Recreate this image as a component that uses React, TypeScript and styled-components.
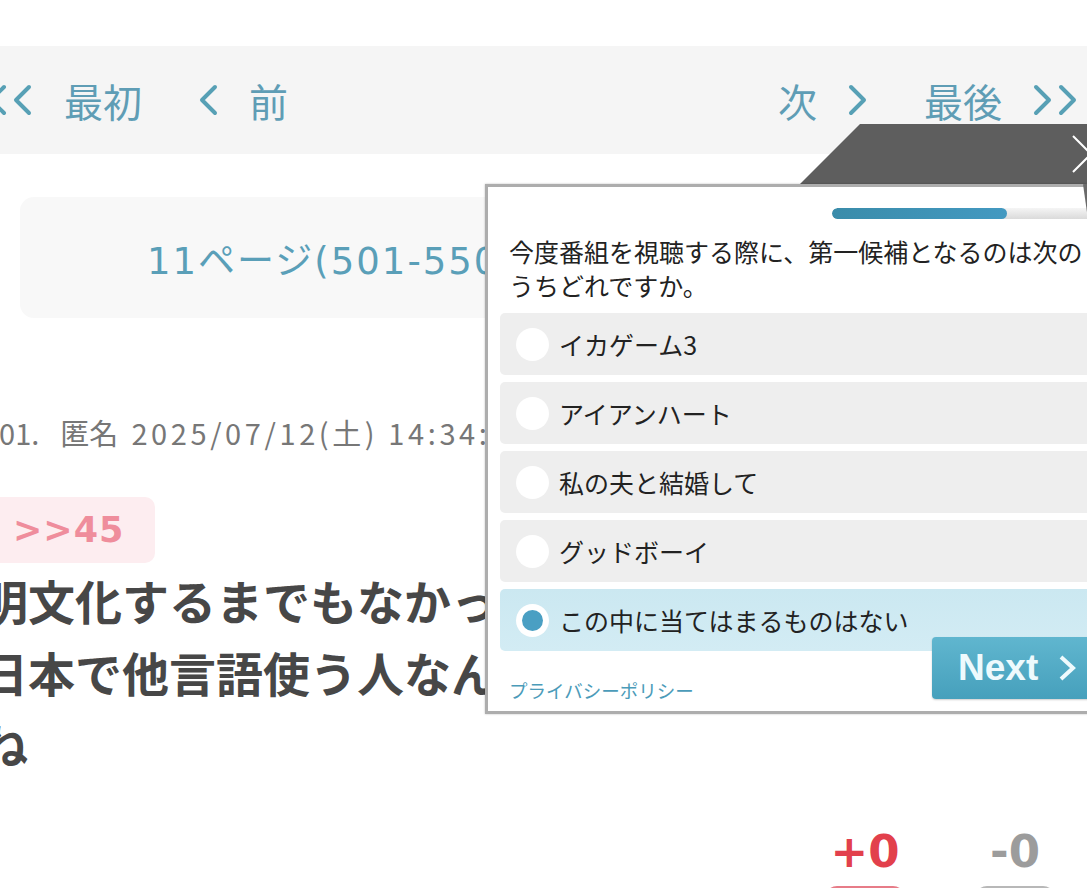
import React from 'react'
import styled, { createGlobalStyle } from 'styled-components'

const GlobalStyle = createGlobalStyle`
  html, body {
    margin: 0;
    padding: 0;
    overflow: hidden;
    background: #fff;
  }
  body {
    font-family: "Noto Sans CJK JP", "Noto Sans", sans-serif;
  }
`

const Screen = styled.div`
  position: relative;
  width: 1087px;
  height: 888px;
  overflow: hidden;
  padding-top: 46px;
  box-sizing: border-box;
`

/* pager */

const Pager = styled.nav`
  display: flex;
  justify-content: space-between;
  align-items: center;
  height: 108px;
  padding-right: 9px;
  background: #f5f5f5;
`

const PagerGroup = styled.div<{ $shift?: number }>`
  display: flex;
  align-items: center;
  gap: 57px;
  margin-left: ${({ $shift }) => $shift ?? 0}px;
`

const PagerLink = styled.a`
  display: flex;
  align-items: center;
  gap: 31px;
  color: #5f9db5;
  font-size: 39px;
  line-height: 1;
  text-decoration: none;
`

const Chevron = ({ dir, double }: { dir: 'left' | 'right', double?: boolean }) => {
  const one = dir === 'left' ? '16,3 3,16 16,29' : '3,3 16,16 3,29'
  return (
    <svg width={ double ? 45 : 19 } height="32" viewBox={ `0 0 ${double ? 45 : 19} 32` }>
      <polyline points={ one } fill="none" stroke="#57a0b5" strokeWidth="4" strokeLinecap="round" strokeLinejoin="round" />
      { double && (
        <g transform="translate(25 0)">
          <polyline points={ one } fill="none" stroke="#57a0b5" strokeWidth="4" strokeLinecap="round" strokeLinejoin="round" />
        </g>
      ) }
    </svg>
  )
}

const PageSelect = styled.div`
  display: flex;
  align-items: center;
  height: 121px;
  margin: 43px 20px 0;
  padding-left: 127px;
  border-radius: 14px;
  background: #f8f8f8;
  color: #5a9fb8;
  font-family: "DejaVu Sans", "Noto Sans CJK JP", sans-serif;
  font-size: 37px;
  letter-spacing: 2px;
`

/* comment */

const Meta = styled.div`
  display: flex;
  align-items: baseline;
  margin: 94px 0 0 -17px;
  color: #777;
  font-size: 29px;
  line-height: 40px;
  white-space: nowrap;
`

const MetaName = styled.span`
  margin: 0 13px 0 21px;
`

const MetaDate = styled.span`
  letter-spacing: 3.6px;
`

const Anchor = styled.div`
  display: flex;
  align-items: center;
  width: fit-content;
  height: 66px;
  margin: 45px 0 0 -10px;
  padding: 0 31px 0 23px;
  border-radius: 10px;
  background: #fdedf0;
  color: #ef8d9c;
  font-family: "DejaVu Sans", sans-serif;
  font-weight: bold;
  font-size: 35px;
  letter-spacing: 1px;
`

const Body = styled.p`
  margin: 1px 0 0 -19px;
  color: #474747;
  font-size: 47px;
  font-weight: 700;
  line-height: 72px;
  white-space: pre-line;
`

const Votes = styled.div`
  display: flex;
  justify-content: flex-end;
  gap: 70px;
  margin-top: 49px;
  padding-right: 32px;
`

const Vote = styled.div`
  display: flex;
  flex-direction: column;
  align-items: center;
  gap: 11px;
  width: 80px;
`

const VoteCount = styled.span<{ $plus?: boolean }>`
  color: ${({ $plus }) => ($plus ? '#e2404c' : '#9c9c9c')};
  font-family: "DejaVu Sans", sans-serif;
  font-weight: bold;
  font-size: 45px;
  line-height: 46px;
`

const VoteButton = styled.button<{ $plus?: boolean }>`
  width: 80px;
  height: 60px;
  border: 0;
  border-radius: 12px;
  background: ${({ $plus }) => ($plus ? '#e77c88' : '#b8b8b8')};
`

/* survey overlay */

const Survey = styled.div`
  position: absolute;
  left: 485px;
  top: 124px;
  width: 638px;
  display: flex;
  flex-direction: column;
`

const SurveyTab = styled.div`
  display: flex;
  align-items: center;
  height: 60px;
  margin-left: 315px;
  padding-left: 271px;
  background: #5e5e5e;
  clip-path: polygon(60px 0, 100% 0, 100% 100%, 0 100%);
`

const SurveyBox = styled.div`
  position: relative;
  border: 3px solid #adadad;
  background: #fff;
  box-shadow: 0 0 2px rgba(0, 0, 0, 0.25);
`

const TabEdge = styled.span`
  position: absolute;
  left: 595px;
  top: -3px;
  width: 4px;
  height: 31px;
  background: #6a6a6a;
  transform: rotate(-8deg);
  transform-origin: top;
`

const Progress = styled.div`
  display: flex;
  justify-content: flex-end;
  margin-top: 21px;
  padding-right: 20px;
`

const Track = styled.div`
  width: 268px;
  height: 11px;
  border-radius: 6px;
  background: linear-gradient(#f5f5f5, #dadada);
  overflow: hidden;
`

const Fill = styled.div`
  height: 100%;
  border-radius: 6px;
  background: linear-gradient(to right, #3a8caa, #4399c1);
`

const Question = styled.p`
  margin: 15px 21px 0;
  color: #222;
  font-size: 25px;
  line-height: 34px;
`

const Options = styled.div`
  display: flex;
  flex-direction: column;
  gap: 7px;
  margin: 11px 12px 0;
`

const Option = styled.label<{ $checked?: boolean }>`
  display: flex;
  align-items: center;
  gap: 10px;
  height: 62px;
  padding-left: 16px;
  border-radius: 5px;
  background: ${({ $checked }) => ($checked ? 'linear-gradient(#cbe8f1, #d3ecf4)' : '#eeeeee')};
  color: #222;
  font-size: 25px;
`

const Radio = styled.span<{ $checked?: boolean }>`
  display: flex;
  align-items: center;
  justify-content: center;
  width: 33px;
  height: 33px;
  border-radius: 50%;
  background: #fff;

  &::after {
    content: "";
    display: ${({ $checked }) => ($checked ? 'block' : 'none')};
    width: 21px;
    height: 21px;
    border-radius: 50%;
    background: #4a9fc3;
  }
`

const Footer = styled.div`
  display: flex;
  justify-content: space-between;
  align-items: flex-end;
  margin-top: -14px;
  padding: 0 12px 12px 21px;
`

const Privacy = styled.a`
  margin-bottom: -3px;
  color: #4b9bb9;
  font-size: 18.5px;
  line-height: 24px;
  text-decoration: none;
`

const NextButton = styled.button`
  display: flex;
  align-items: center;
  gap: 20px;
  width: 176px;
  height: 62px;
  padding: 0 0 0 26px;
  border: 0;
  border-radius: 4px;
  background: linear-gradient(#60b6cf, #46a0bc);
  box-shadow: 0 1px 2px rgba(0, 0, 0, 0.2);
  color: #eefafd;
  font-family: "Liberation Sans", Arial, sans-serif;
  font-weight: bold;
  font-size: 37px;
`

const choices = ['イカゲーム3', 'アイアンハート', '私の夫と結婚して', 'グッドボーイ', 'この中に当てはまるものはない']

export default function App() {
  return (
    <>
      <GlobalStyle />
      <Screen>
        <Pager>
          <PagerGroup $shift={ -12 }>
            <PagerLink><Chevron dir="left" double />最初</PagerLink>
            <PagerLink><Chevron dir="left" />前</PagerLink>
          </PagerGroup>
          <PagerGroup>
            <PagerLink>次<Chevron dir="right" /></PagerLink>
            <PagerLink>最後<Chevron dir="right" double /></PagerLink>
          </PagerGroup>
        </Pager>

        <PageSelect>11ページ(501-550)</PageSelect>

        <Meta>
          <span>501.</span>
          <MetaName>匿名</MetaName>
          <MetaDate>2025/07/12(土) 14:34:22</MetaDate>
        </Meta>
        <Anchor>&gt;&gt;45</Anchor>
        <Body>{ '明文化するまでもなかったんだろうけど、昔は\n日本で他言語使う人なんてそんなにいなかったから\nね' }</Body>

        <Votes>
          <Vote>
            <VoteCount $plus>+0</VoteCount>
            <VoteButton $plus />
          </Vote>
          <Vote>
            <VoteCount>-0</VoteCount>
            <VoteButton />
          </Vote>
        </Votes>

        <Survey>
          <SurveyTab>
            <svg width="40" height="40" viewBox="0 0 40 40">
              <path d="M2 2 L38 38 M38 2 L2 38" stroke="#fff" strokeWidth="2" />
            </svg>
          </SurveyTab>
          <SurveyBox>
            <TabEdge />
            <Progress>
              <Track>
                <Fill style={ { width: `${(175 / 268) * 100}%` } } />
              </Track>
            </Progress>
            <Question>今度番組を視聴する際に、第一候補となるのは次のうちどれですか。</Question>
            <Options>
              { choices.map((c, i) => (
                <Option key={ c } $checked={ i === 4 }>
                  <Radio $checked={ i === 4 } />
                  { c }
                </Option>
              )) }
            </Options>
            <Footer>
              <Privacy>プライバシーポリシー</Privacy>
              <NextButton>
                Next
                <svg width="18" height="28" viewBox="0 0 18 28">
                  <polyline points="3,3 15,14 3,25" fill="none" stroke="#eefafd" strokeWidth="4" />
                </svg>
              </NextButton>
            </Footer>
          </SurveyBox>
        </Survey>
      </Screen>
    </>
  )
}
